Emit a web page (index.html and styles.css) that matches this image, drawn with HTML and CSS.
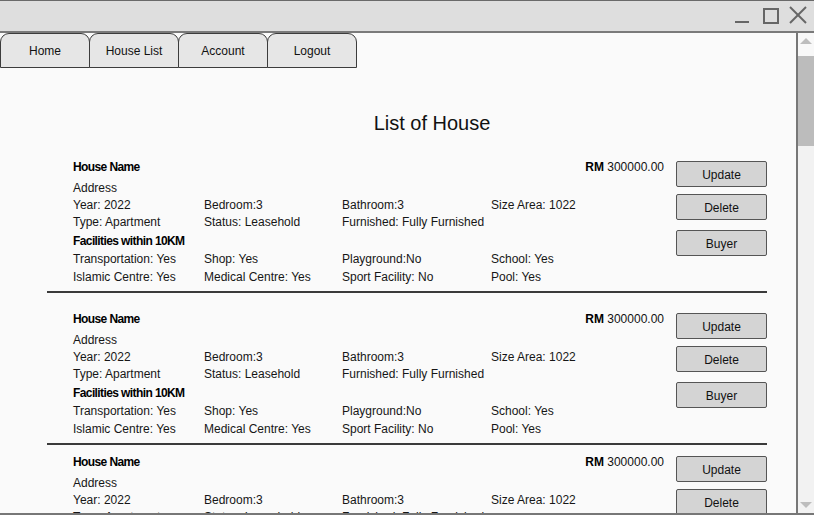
FILE: index.html
```html
<!DOCTYPE html>
<html lang="en">
<head>
<meta charset="utf-8">
<title>List of House</title>
<link rel="stylesheet" href="styles.css">
</head>
<body>
<div class="window">
  <header class="titlebar">
    <svg class="controls" width="80" height="30" viewBox="0 0 80 30" aria-hidden="true">
      <line x1="5" y1="21" x2="19" y2="21" stroke="#666" stroke-width="2"/>
      <rect x="34" y="8" width="14" height="14" fill="none" stroke="#666" stroke-width="2"/>
      <line x1="60" y1="6" x2="76" y2="22" stroke="#666" stroke-width="2"/>
      <line x1="76" y1="6" x2="60" y2="22" stroke="#666" stroke-width="2"/>
    </svg>
  </header>
  <div class="frame">
    <main class="content">
      <nav class="tabs">
        <div class="tab">Home</div>
        <div class="tab">House List</div>
        <div class="tab">Account</div>
        <div class="tab">Logout</div>
      </nav>
      <h1 class="title">List of House</h1>
      <section class="list">

        <article class="card">
          <div class="info">
            <div class="name-row"><span class="name">House Name</span><span class="price"><b>RM</b> 300000.00</span></div>
            <div class="address">Address</div>
            <div class="grid grid--details">
              <span>Year: 2022</span><span>Bedroom:3</span><span>Bathroom:3</span><span>Size Area: 1022</span>
              <span>Type: Apartment</span><span>Status: Leasehold</span><span>Furnished: Fully Furnished</span><span></span>
            </div>
            <div class="facilities">Facilities within 10KM</div>
            <div class="grid grid--fac">
              <span>Transportation: Yes</span><span>Shop: Yes</span><span>Playground:No</span><span>School: Yes</span>
              <span>Islamic Centre: Yes</span><span>Medical Centre: Yes</span><span>Sport Facility: No</span><span>Pool: Yes</span>
            </div>
          </div>
          <div class="actions">
            <button class="btn">Update</button>
            <button class="btn btn--delete">Delete</button>
            <button class="btn btn--buyer">Buyer</button>
          </div>
        </article>

        <article class="card card--second">
          <div class="info">
            <div class="name-row"><span class="name">House Name</span><span class="price"><b>RM</b> 300000.00</span></div>
            <div class="address">Address</div>
            <div class="grid grid--details">
              <span>Year: 2022</span><span>Bedroom:3</span><span>Bathroom:3</span><span>Size Area: 1022</span>
              <span>Type: Apartment</span><span>Status: Leasehold</span><span>Furnished: Fully Furnished</span><span></span>
            </div>
            <div class="facilities">Facilities within 10KM</div>
            <div class="grid grid--fac">
              <span>Transportation: Yes</span><span>Shop: Yes</span><span>Playground:No</span><span>School: Yes</span>
              <span>Islamic Centre: Yes</span><span>Medical Centre: Yes</span><span>Sport Facility: No</span><span>Pool: Yes</span>
            </div>
          </div>
          <div class="actions">
            <button class="btn">Update</button>
            <button class="btn btn--delete">Delete</button>
            <button class="btn btn--buyer">Buyer</button>
          </div>
        </article>

        <article class="card card--third">
          <div class="info">
            <div class="name-row"><span class="name">House Name</span><span class="price"><b>RM</b> 300000.00</span></div>
            <div class="address">Address</div>
            <div class="grid grid--details">
              <span>Year: 2022</span><span>Bedroom:3</span><span>Bathroom:3</span><span>Size Area: 1022</span>
              <span>Type: Apartment</span><span>Status: Leasehold</span><span>Furnished: Fully Furnished</span><span></span>
            </div>
            <div class="facilities">Facilities within 10KM</div>
            <div class="grid grid--fac">
              <span>Transportation: Yes</span><span>Shop: Yes</span><span>Playground:No</span><span>School: Yes</span>
              <span>Islamic Centre: Yes</span><span>Medical Centre: Yes</span><span>Sport Facility: No</span><span>Pool: Yes</span>
            </div>
          </div>
          <div class="actions">
            <button class="btn">Update</button>
            <button class="btn btn--delete">Delete</button>
            <button class="btn btn--buyer">Buyer</button>
          </div>
        </article>

      </section>
    </main>
    <aside class="scrollbar">
      <div class="sb-up"><span class="tri tri--up"></span></div>
      <div class="sb-thumb"></div>
      <div class="sb-track"></div>
      <div class="sb-down"><span class="tri tri--down"></span></div>
    </aside>
  </div>
</div>
</body>
</html>
```
FILE: styles.css
```css
* { box-sizing: border-box; }

html, body {
  margin: 0;
  padding: 0;
}

body {
  width: 814px;
  height: 515px;
  overflow: hidden;
  background: #fafafa;
  font-family: "Liberation Sans", Arial, sans-serif;
  color: #161616;
}

.window {
  display: flex;
  flex-direction: column;
  height: 515px;
}

.titlebar {
  flex: 0 0 33px;
  background: #dedede;
  border-top: 1px solid #6a6a6a;
  border-bottom: 2px solid #7a7a7a;
  display: flex;
  justify-content: flex-end;
  padding-right: 4px;
}

.controls { display: block; }

.frame {
  flex: 1;
  min-height: 0;
  display: flex;
  border-bottom: 2px solid #777;
}

.content {
  flex: 1;
  min-width: 0;
  overflow: hidden;
  background: #fafafa;
}

/* tabs */
.tabs {
  display: flex;
  height: 35px;
}

.tab {
  width: 90px;
  height: 35px;
  margin-left: -1px;
  border: 1px solid #3c3c3c;
  border-radius: 9px 9px 0 0;
  background: #e6e6e6;
  display: flex;
  align-items: center;
  justify-content: center;
  padding-top: 1px;
  font-size: 12px;
  color: #111;
}

.tab:first-child { margin-left: 0; }

/* title */
.title {
  margin: 43px 0 0;
  padding-left: 68px;
  text-align: center;
  font-size: 20px;
  font-weight: normal;
  line-height: 24px;
  color: #111;
}

/* list */
.list {
  margin: 23px 0 0 47px;
  width: 720px;
}

.card {
  display: flex;
  padding: 0 0 5px 26px;
  border-bottom: 2px solid #3a3a3a;
}

.card--second { padding-top: 17px; }
.card--third { padding-top: 8px; }

.info {
  flex: 1;
  min-width: 0;
  font-size: 12px;
}

.name-row {
  display: flex;
  justify-content: space-between;
  height: 18px;
  line-height: 18px;
}

.name {
  font-size: 12px;
  font-weight: bold;
  color: #000;
  letter-spacing: -0.6px;
}

.price {
  font-size: 12px;
  color: #111;
}

.price b { color: #000; }

.address {
  margin-top: 4px;
  line-height: 17px;
}

.grid {
  display: grid;
  grid-template-columns: 131px 138px 149px auto;
  white-space: nowrap;
}

.grid--details { line-height: 17px; }
.grid--fac { line-height: 18px; }

.facilities {
  margin-top: 2px;
  line-height: 17px;
  font-size: 12px;
  font-weight: bold;
  color: #000;
  letter-spacing: -0.6px;
}

.actions {
  width: 91px;
  margin-left: 12px;
  padding-top: 3px;
  display: flex;
  flex-direction: column;
}

.btn {
  height: 26px;
  padding: 1px 0 0;
  border: 1.5px solid #555;
  border-radius: 2px;
  background: #d4d4d4;
  font-family: "Liberation Sans", Arial, sans-serif;
  font-size: 12px;
  color: #111;
}

.btn--delete { margin-top: 7px; }
.btn--buyer { margin-top: 10px; }

/* scrollbar */
.scrollbar {
  flex: 0 0 18px;
  border-left: 2px solid #777;
  display: flex;
  flex-direction: column;
  background: #f2f2f2;
}

.sb-up {
  flex: 0 0 23px;
  background: #f8f8f8;
  display: flex;
  justify-content: center;
  padding-top: 5px;
}

.sb-thumb {
  flex: 0 0 90px;
  background: #bcbcbc;
}

.sb-track { flex: 1; }

.sb-down {
  flex: 0 0 16px;
  display: flex;
  justify-content: center;
  padding-top: 5px;
}

.tri {
  width: 0;
  height: 0;
  border-left: 6px solid transparent;
  border-right: 6px solid transparent;
}

.tri--up { border-bottom: 6px solid #bdbdbd; }
.tri--down { border-top: 6px solid #bdbdbd; }
```
